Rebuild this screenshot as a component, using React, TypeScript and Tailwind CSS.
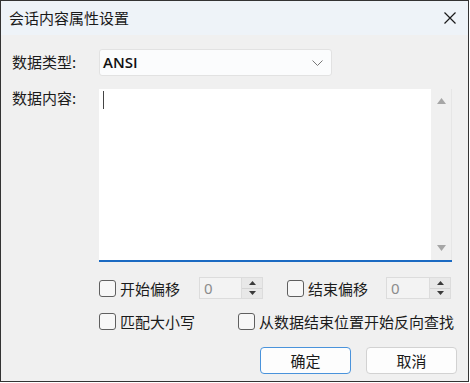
import React from 'react'

const cjk = "font-['Segoe_UI','Noto_Sans_CJK_SC','Noto_Sans',sans-serif]"

const CheckBox: React.FC<{ label: string; className?: string }> = ({ label, className = '' }) => (
  <label className={`flex items-center ${className}`}>
    <span className="w-[17px] h-[17px] rounded-[3px] border border-[#5f5f5f] bg-[#f7f7f7] shrink-0" />
    <span className="ml-[4px] text-[15px] leading-none text-[#1b1b1b]">{label}</span>
  </label>
)

const SpinBox: React.FC<{ className?: string }> = ({ className = '' }) => (
  <div className={`flex h-[22px] border border-[#dcdcdc] bg-[#f3f3f3] ${className}`}>
    <span className="flex-1 pl-[4px] text-[15px] leading-[20px] text-[#8c8c8c] font-['Noto_Sans',sans-serif]">0</span>
    <div className="w-[21px] flex flex-col bg-[#e8e8e8] border-l border-[#dcdcdc]">
      <div className="flex-1 flex items-center justify-center border-b border-[#d4d4d4]">
        <svg width="7" height="4" viewBox="0 0 7 4"><path d="M3.5 0 L7 4 L0 4 Z" fill="#3a3a3a" /></svg>
      </div>
      <div className="flex-1 flex items-center justify-center">
        <svg width="7" height="4" viewBox="0 0 7 4"><path d="M0 0 L7 0 L3.5 4 Z" fill="#3a3a3a" /></svg>
      </div>
    </div>
  </div>
)

export default function App() {
  return (
    <div className={`w-[469px] h-[382px] border border-[#333] bg-[#f0f0f0] flex flex-col ${cjk}`}>
      {/* Title bar */}
      <div className="h-[34px] bg-[#eef3f8] flex items-center justify-between pl-[8px] pr-[12px]">
        <span className="text-[15px] text-[#1a1a1a]">会话内容属性设置</span>
        <svg width="12" height="12" viewBox="0 0 12 12">
          <path d="M0.5 0.5 L11.5 11.5 M11.5 0.5 L0.5 11.5" stroke="#1a1a1a" strokeWidth="1.2" />
        </svg>
      </div>

      <div className="flex-1 flex flex-col pl-[11px] pt-[14px]">
        {/* Data type */}
        <div className="flex items-center h-[27px]">
          <span className="w-[87px] text-[15px] text-[#1b1b1b]">数据类型:</span>
          <div className="w-[233px] h-[27px] border border-[#e2e2e2] bg-[#fbfcfd] rounded-[3px] flex items-center justify-between pl-[3px] pr-[8px]">
            <span className="text-[15px] text-[#111] font-['Segoe_UI','Open_Sans',sans-serif] font-semibold">ANSI</span>
            <svg width="11" height="6" viewBox="0 0 11 6">
              <path d="M0.5 0.5 L5.5 5.5 L10.5 0.5" stroke="#777" fill="none" strokeWidth="1" />
            </svg>
          </div>
        </div>

        {/* Data content */}
        <div className="flex mt-[13px]">
          <span className="w-[87px] text-[15px] text-[#1b1b1b] leading-none pt-[1px]">数据内容:</span>
          <div className="w-[353px] h-[173px] bg-white border-b-2 border-[#1b6ac2] flex">
            <div className="flex-1 pl-[4px] pt-[2px]">
              <div className="w-[1px] h-[18px] bg-[#444]" />
            </div>
            <div className="w-[21px] bg-[#f0f0f0] border-r border-[#e6e6e6] flex flex-col justify-between items-center py-[9px]">
              <svg width="9" height="6" viewBox="0 0 9 6"><path d="M4.5 0 L9 6 L0 6 Z" fill="#a6a6a6" /></svg>
              <svg width="9" height="6" viewBox="0 0 9 6"><path d="M0 0 L9 0 L4.5 6 Z" fill="#a6a6a6" /></svg>
            </div>
          </div>
        </div>

        {/* Offsets */}
        <div className="flex items-center mt-[15px] pl-[87px]">
          <CheckBox label="开始偏移" className="w-[100px]" />
          <SpinBox className="w-[64px]" />
          <CheckBox label="结束偏移" className="w-[99px] ml-[24px]" />
          <SpinBox className="w-[65px]" />
        </div>

        {/* Options */}
        <div className="flex items-center mt-[14px] pl-[87px]">
          <CheckBox label="匹配大小写" className="w-[139px]" />
          <CheckBox label="从数据结束位置开始反向查找" />
        </div>

        {/* Buttons */}
        <div className="flex justify-end gap-[15px] mt-[17px] pr-[11px]">
          <button className="w-[91px] h-[27px] rounded-[4px] border border-[#4a93db] bg-[#fdfdfd] text-[15px] text-[#1b1b1b] leading-none">确定</button>
          <button className="w-[91px] h-[27px] rounded-[4px] border border-[#d2d2d2] bg-[#fdfdfd] text-[15px] text-[#1b1b1b] leading-none">取消</button>
        </div>
      </div>
    </div>
  )
}
